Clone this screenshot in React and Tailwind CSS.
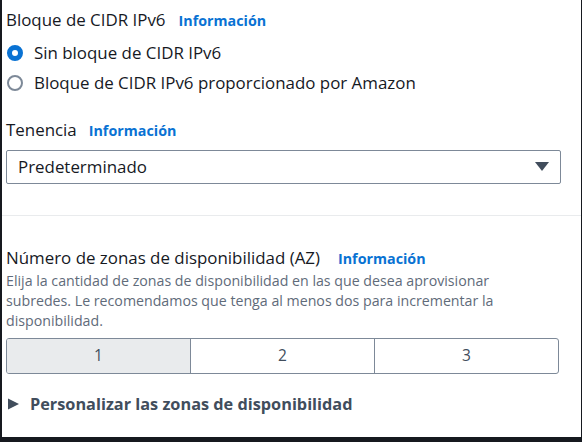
const Info = () => (
  <span className="text-[14.3px] font-bold text-[#0972d3]">Información</span>
);

const Radio = ({ checked, children }) => (
  <label className="flex items-center h-[30px]">
    {checked ? (
      <span className="w-[16px] h-[16px] rounded-full border-[5px] border-[#0972d3] bg-white" />
    ) : (
      <span className="w-[16px] h-[16px] rounded-full border-2 border-[#7d8998] bg-white" />
    )}
    <span className="ml-[11px] text-[16.9px] text-[#16191f]">{children}</span>
  </label>
);

export default function App() {
  return (
    <div
      className="w-[582px] h-[442px] bg-[#16191f] pl-[2px] pr-[1px] pb-[5px] overflow-hidden"
      style={{ fontFamily: '"Open Sans", sans-serif' }}
    >
      <div className="h-full bg-white">
        <div className="px-[4px] pt-[7px]">
          <div className="flex items-baseline gap-[13px] h-[26px]">
            <span className="text-[16.9px] text-[#16191f]">Bloque de CIDR IPv6</span>
            <Info />
          </div>
          <div className="mt-[5px] pl-[1px]">
            <Radio checked>Sin bloque de CIDR IPv6</Radio>
            <Radio>Bloque de CIDR IPv6 proporcionado por Amazon</Radio>
          </div>
          <div className="flex items-baseline gap-[12px] h-[26px] mt-[19px]">
            <span className="text-[16.9px] text-[#16191f]">Tenencia</span>
            <Info />
          </div>
          <div className="mt-[7px] w-[555px] h-[34px] border border-[#7d8998] rounded-[2px] flex items-center justify-between pl-[11px] pr-[11px]">
            <span className="text-[16.9px] text-[#16191f]">Predeterminado</span>
            <svg width="14" height="10" viewBox="0 0 14 10">
              <path d="M0 0 H14 L7 9 Z" fill="#414d5c" />
            </svg>
          </div>
        </div>
        <div className="mt-[31px] border-t border-[#e9ebed]" />
        <div className="px-[4px] pt-[29px]">
          <div className="flex items-baseline gap-[18px] h-[26px]">
            <span className="text-[16.9px] text-[#16191f]">Número de zonas de disponibilidad (AZ)</span>
            <Info />
          </div>
          <p className="text-[14.2px] leading-[20px] text-[#5f6b7a] w-[510px]">
            Elija la cantidad de zonas de disponibilidad en las que desea aprovisionar subredes. Le recomendamos que tenga al menos dos para incrementar la disponibilidad.
          </p>
          <div className="mt-[7px] w-[553px] h-[36px] border border-[#7d8998] rounded-[3px] flex overflow-hidden">
            <div className="flex-1 bg-[#e9ebed] flex items-center justify-center text-[15.5px] text-[#414d5c]">1</div>
            <div className="flex-1 border-l border-[#7d8998] flex items-center justify-center text-[15.5px] text-[#414d5c]">2</div>
            <div className="flex-1 border-l border-[#7d8998] flex items-center justify-center text-[15.5px] text-[#414d5c]">3</div>
          </div>
          <div className="flex items-center mt-[19px] h-[22px]">
            <svg width="11" height="12" viewBox="0 0 11 12" className="ml-[2px]">
              <path d="M0 0.5 L11 6 L0 11.5 Z" fill="#414d5c" />
            </svg>
            <span className="ml-[11px] text-[16.3px] font-bold text-[#414d5c]">Personalizar las zonas de disponibilidad</span>
          </div>
        </div>
      </div>
    </div>
  );
}
